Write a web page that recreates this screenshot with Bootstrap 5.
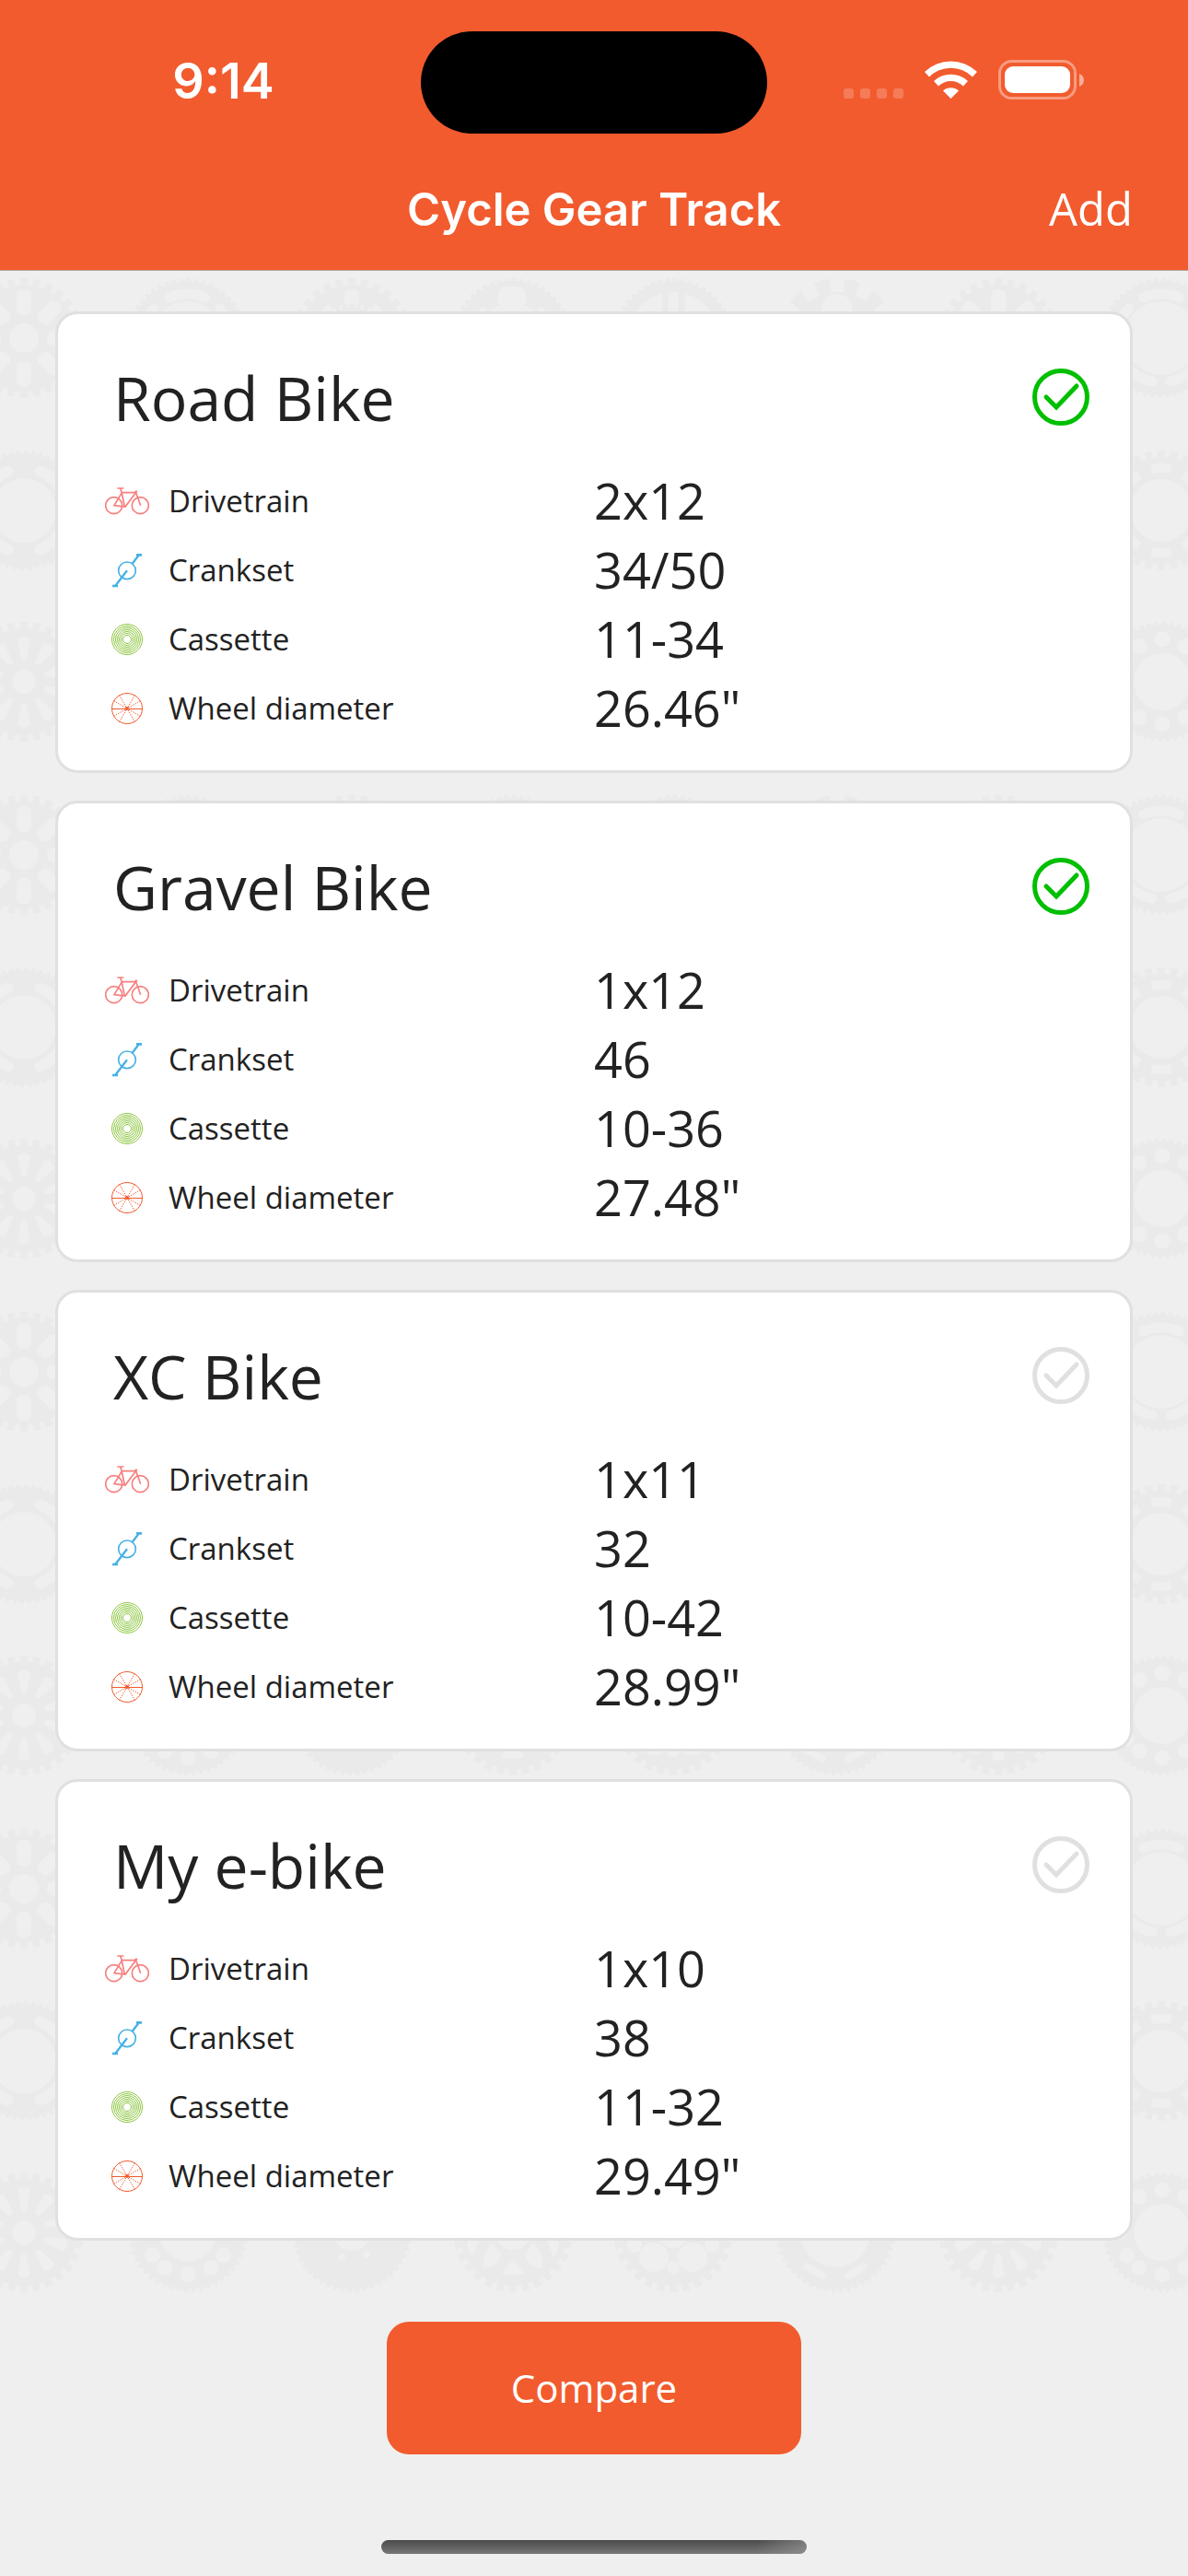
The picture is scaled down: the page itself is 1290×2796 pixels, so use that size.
<!DOCTYPE html>
<html lang="en">
<head>
<meta charset="utf-8">
<meta name="viewport" content="width=device-width, initial-scale=1">
<title>Cycle Gear Track</title>
<link rel="stylesheet" href="https://cdn.jsdelivr.net/npm/bootstrap@5.3.0/dist/css/bootstrap.min.css">
<style>
  :root { --brand: #f25b2e; --ink: #222; --line: #e0e0e0; --page: #efefef; --gear: #eaeaea; }
  body { background: var(--page); color: var(--ink); font-family: "Open Sans", "Noto Sans", sans-serif; }
  .app-header { background: var(--brand); color: #fff; border-bottom: 1px solid #b8a59c; }
  .status-bar { height: 162px; padding-top: 34px; }
  .status-side { height: 111px; }
  .clock { font: 600 54px/64px Inter, sans-serif; padding: 0 0 4px 28px; }
  .island { width: 376px; height: 111px; border-radius: 56px; background: #000; }
  .status-icons { padding-left: 83px; }
  .nav-row { height: 131px; padding: 0 60px; }
  .nav-title { font: 600 49px/64px Inter, sans-serif; }
  .nav-add { color: #fff; display: block; font-size: 49px; line-height: 64px; padding-bottom: 4px; text-decoration: none; }
  .bike-list { padding: 44px 60px 68px; }
  .gear-pattern { z-index: 0; }
  .bike-stack { z-index: 1; gap: 30px; }
  .bike-card { border: 3px solid var(--line); border-radius: 24px; background: #fff; padding-bottom: 30px; }
  .bike-head { height: 165px; padding: 0 43px 0 60px; }
  .bike-name { font-size: 66px; line-height: 92px; font-weight: 400; margin: 44px 0 0; }
  .bike-check.form-check-input { width: 64px; height: 64px; margin: 58px 0 0; border: 0; border-radius: 50%; background-color: transparent; background-size: 64px 64px;
    background-image: url("data:image/svg+xml,%3Csvg xmlns='http://www.w3.org/2000/svg' viewBox='0 0 64 64' fill='none' stroke='%23e0e0e0' stroke-width='5'%3E%3Ccircle cx='32' cy='32' r='28.5'/%3E%3Cpath d='M16 32l11 11 22-23' stroke-linecap='round'/%3E%3C/svg%3E"); }
  .bike-check.form-check-input:checked { background-color: transparent;
    background-image: url("data:image/svg+xml,%3Csvg xmlns='http://www.w3.org/2000/svg' viewBox='0 0 64 64' fill='none' stroke='%2300bf00' stroke-width='5'%3E%3Ccircle cx='32' cy='32' r='28.5'/%3E%3Cpath d='M16 32l11 11 22-23' stroke-linecap='round'/%3E%3C/svg%3E"); }
  .spec-line { height: 75px; }
  .spec-key { padding-left: 51px; gap: 21px; font-size: 33px; line-height: 45px; font-weight: 400; }
  .spec-key svg { width: 48px; height: 48px; flex: none; }
  .spec-value { font-size: 54px; line-height: 75px; }
  .btn-compare { --bs-btn-bg: #f25b2e; --bs-btn-color: #fff; --bs-btn-hover-bg: #db4e24; --bs-btn-hover-color: #fff; --bs-btn-active-bg: #db4e24; --bs-btn-active-color: #fff;
    min-width: 450px; height: 144px; margin-top: 20px; border: 0; border-radius: 24px; font-size: 42px; line-height: 56px; }
  .home-bar { width: 462px; height: 15px; margin: 93px 0 24px; border-radius: 8px; background: linear-gradient(100deg, transparent 88%, #9a9a9a99), linear-gradient(#4b4b4b, #777); }
</style>
</head>
<body>

<svg class="d-none" aria-hidden="true">
  <symbol id="i-drivetrain" viewBox="0 0 144 144">
    <g fill="none" stroke="#f77f7f" stroke-width="5">
      <circle cx="29" cy="86" r="27"/><circle cx="115" cy="86" r="27"/>
      <path d="M40 30h21M50 30l4 12 10 48M54 44h45l6-5M102 42L66 90l-36-4 24-40M99 38l17 48"/>
    </g>
  </symbol>
  <symbol id="i-crankset" viewBox="0 0 144 144">
    <g fill="none" stroke="#46b1e5" stroke-width="5">
      <circle cx="72" cy="73" r="28"/>
      <path d="M72 73L34 122M89 50l20-26" stroke-width="7"/><path d="M24 123h18M102 22h18" stroke-width="8"/>
    </g>
  </symbol>
  <symbol id="i-cassette" viewBox="0 0 144 144">
    <g fill="none" stroke="#8cc63f" stroke-width="3">
      <circle cx="72" cy="72" r="49.500"/><circle cx="72" cy="72" r="43.500"/><circle cx="72" cy="72" r="37.500"/><circle cx="72" cy="72" r="31.500"/>
      <circle cx="72" cy="72" r="25.500"/><circle cx="72" cy="72" r="19.500"/><circle cx="72" cy="72" r="13.500"/>
    </g>
  </symbol>
  <symbol id="i-wheel" viewBox="0 0 144 144">
    <g fill="none" stroke="#f25b2e" stroke-width="3">
      <circle cx="72" cy="72" r="49.500"/><path d="M22 73.500h100"/>
      <path d="M47 29l50 86M97 29l-50 86M29 47l86 50M115 47l-86 50" stroke-width="3" stroke-dasharray="4 4"/>
    </g>
    <circle cx="72" cy="72" r="6" fill="#f25b2e"/>
  </symbol>
</svg>

<header class="app-header">
  <div class="status-bar d-flex">
    <div class="status-side flex-fill d-flex align-items-center justify-content-center w-25"><span class="clock">9:14</span></div>
    <div class="island flex-shrink-0"></div>
    <div class="status-side status-icons flex-fill w-25">
      <svg width="264" height="111" viewBox="0 0 264 111" role="img" aria-label="Wi-Fi on, battery full">
        <g fill="#fff">
          <g opacity=".2"><rect y="62" width="11" height="11" rx="3"/><rect x="18" y="62" width="11" height="11" rx="3"/><rect x="36" y="62" width="11" height="11" rx="3"/><rect x="54" y="62" width="11" height="11" rx="3"/></g>
          <path d="M88 44a41 41 0 0 1 57 0l-5 5.500a33 33 0 0 0-47 0zM98 54a27 27 0 0 1 37 0l-5 5.500a19.500 19.500 0 0 0-27 0zM108 64.500a13 13 0 0 1 17 0L116.500 73z"/>
          <rect x="175" y="38" width="71" height="29" rx="9"/>
          <path d="M256 46q5 2 5 7t-5 7z" opacity=".5"/>
        </g>
        <rect x="169.500" y="32.500" width="82" height="40" rx="13" fill="none" stroke="#fff" stroke-width="3" opacity=".4"/>
      </svg>
    </div>
  </div>
  <nav class="nav-row d-flex align-items-center" aria-label="Main">
    <div class="col"></div>
    <h1 class="nav-title m-0">Cycle Gear Track</h1>
    <div class="col d-flex justify-content-end"><a class="nav-add" href="#add">Add</a></div>
  </nav>
</header>

<main>
  <section class="bike-list position-relative">
    <svg class="gear-pattern position-absolute top-0 start-0 w-100 h-100" aria-hidden="true">
      <defs>
        <g id="fine" fill="#eaeaea"><circle r="62"/><circle r="62" fill="none" stroke="#eaeaea" stroke-width="6" pathLength="96" stroke-dasharray="1 1"/></g>
        <g id="coarse" fill="#eaeaea"><circle r="58"/><circle r="60" fill="none" stroke="#eaeaea" stroke-width="10" pathLength="112" stroke-dasharray="2.200 1.800" stroke-dashoffset="1.100"/></g>
        <g id="eyes4"><circle r="8.500" cy="-46"/><circle r="8.500" cx="46"/><circle r="8.500" cy="46"/><circle r="8.500" cx="-46"/></g>
        <path id="drop" d="M-7 -46q7-7 14 0l-4 21q-3 4-6 0z"/>
        <g id="drops5"><use href="#drop"/><use href="#drop" transform="rotate(72)"/><use href="#drop" transform="rotate(144)"/><use href="#drop" transform="rotate(216)"/><use href="#drop" transform="rotate(288)"/></g>
        <rect id="slot" x="-8" y="-53" width="16" height="28" rx="6"/>
        <g id="slots4"><use href="#slot"/><use href="#slot" transform="rotate(90)"/><use href="#slot" transform="rotate(180)"/><use href="#slot" transform="rotate(270)"/></g>
        <g id="ringA1"><use href="#coarse"/><g fill="#efefef"><circle r="16"/><use href="#slots4"/><use href="#slots4" transform="rotate(45)"/></g></g>
        <g id="ringA2"><use href="#fine"/><circle r="40" fill="#efefef"/><circle r="48" fill="none" stroke="#efefef" stroke-width="11" stroke-linecap="round" pathLength="60" stroke-dasharray="8 4" stroke-dashoffset="-17"/></g>
        <g id="ringB1"><use href="#fine"/><circle r="35" fill="#efefef"/><circle r="46" fill="none" stroke="#efefef" stroke-width="12" stroke-linecap="round" pathLength="40" stroke-dasharray="5 5" stroke-dashoffset="-2.500"/></g>
        <g id="ringB2"><use href="#coarse"/><circle r="34" fill="#efefef"/><circle r="46" fill="none" stroke="#efefef" stroke-width="10" pathLength="40" stroke-dasharray="3 2" stroke-dashoffset="1.500"/></g>
        <g id="ringC1"><use href="#coarse"/><g fill="#efefef"><circle r="13"/><use href="#drops5"/><use href="#drops5" transform="rotate(36)"/></g></g>
        <g id="ringC2"><use href="#fine"/><g fill="#efefef"><circle r="31"/><use href="#eyes4"/><use href="#eyes4" transform="rotate(33)"/><use href="#eyes4" transform="rotate(-33)"/></g></g>
        <pattern id="gears" width="1058" height="561" patternUnits="userSpaceOnUse">
          <use href="#ringA1" x="26" y="73"/><use href="#ringA1" x="1084" y="73"/>
          <use href="#ringA2" x="203" y="73"/>
          <g transform="translate(382 73)"><use href="#coarse"/><g fill="#efefef"><circle r="38"/><use href="#slots4"/><path d="M-38-22l12-16 8 10-8 24-12 6zM38-22L26-38l-8 10 8 24 12 6z"/></g><use href="#coarse" transform="scale(.58)"/><circle r="24" fill="#efefef"/></g>
          <g transform="translate(556 73)"><use href="#fine"/><g fill="#efefef"><circle r="40" cy="2"/><rect x="-15" y="-56" width="30" height="25" rx="9"/><path d="M-32-34q5 0 5 8L-40 0l-12 10q-2-26 20-44zM32-34q-5 0-5 8L40 0l12 10q2-26-20-44z"/></g></g>
          <g transform="translate(731 73)"><use href="#fine"/><circle r="50" fill="#efefef"/><path d="M-9-55v110M9-55v110" stroke="#eaeaea" stroke-width="7"/></g>
          <g transform="translate(909 73)" fill="#eaeaea"><circle r="50"/><circle r="56" fill="none" stroke="#eaeaea" stroke-width="18" pathLength="48" stroke-dasharray="2 2" stroke-dashoffset="-1"/><g fill="#efefef"><circle r="17" cy="-31"/><circle r="17" cx="28" cy="16"/><circle r="17" cx="-28" cy="16"/></g></g>
          <use href="#ringB1" x="26" y="260"/><use href="#ringB1" x="1084" y="260"/>
          <use href="#ringB2" x="203" y="260"/><use href="#ringB1" x="380" y="260"/><use href="#ringB2" x="556" y="260"/><use href="#ringB1" x="731" y="260"/><use href="#ringB2" x="909" y="260"/>
          <use href="#ringC1" x="26" y="446"/><use href="#ringC1" x="1084" y="446"/>
          <use href="#ringC2" x="204" y="446"/>
          <g transform="translate(382 446)"><use href="#fine"/><g fill="#efefef"><circle r="20"/><circle r="4" cx="-11" cy="27"/><circle r="4" cx="16" cy="24"/></g></g>
          <g transform="translate(557 446)"><use href="#coarse"/><g fill="#efefef"><circle r="19"/><path d="M-13 44L0 30l13 14q-13 6-26 0z"/><path d="M-22 12l9 12q-3 14-19 15-1-18 10-27zM22 12l-9 12q3 14 19 15 1-18-10-27zM-50 6l14 0-8 22q-6-8-6-22zM50 6H36l8 22q6-8 6-22z"/></g></g>
          <g transform="translate(731 446)"><use href="#coarse"/><g fill="#efefef"><circle r="17"/><circle r="16" cx="-21" cy="27"/><circle r="16" cx="21" cy="27"/><circle r="8" cx="-42" cy="14"/><circle r="8" cx="42" cy="14"/><circle r="7" cy="38"/></g></g>
          <g transform="translate(907 446)"><use href="#fine"/><g fill="#efefef"><circle r="38"/><path d="M-31 37l17 10M31 37L14 47M-47 0v6M47 0v6" stroke="#efefef" stroke-width="8" stroke-linecap="round"/></g></g>
        </pattern>
      </defs>
      <rect width="100%" height="100%" fill="url(#gears)"/>
    </svg>

    <div class="bike-stack position-relative d-flex flex-column">
      <article class="bike-card">
        <div class="bike-head d-flex justify-content-between align-items-start">
          <h2 class="bike-name">Road Bike</h2>
          <input class="form-check-input bike-check" type="checkbox" aria-label="Compare Road Bike" checked>
        </div>
        <dl class="m-0">
          <div class="spec-line row g-0 align-items-center"><dt class="spec-key col-6 d-flex align-items-center"><svg aria-hidden="true"><use href="#i-drivetrain"/></svg>Drivetrain</dt><dd class="spec-value col-6 m-0">2x12</dd></div>
          <div class="spec-line row g-0 align-items-center"><dt class="spec-key col-6 d-flex align-items-center"><svg aria-hidden="true"><use href="#i-crankset"/></svg>Crankset</dt><dd class="spec-value col-6 m-0">34/50</dd></div>
          <div class="spec-line row g-0 align-items-center"><dt class="spec-key col-6 d-flex align-items-center"><svg aria-hidden="true"><use href="#i-cassette"/></svg>Cassette</dt><dd class="spec-value col-6 m-0">11-34</dd></div>
          <div class="spec-line row g-0 align-items-center"><dt class="spec-key col-6 d-flex align-items-center"><svg aria-hidden="true"><use href="#i-wheel"/></svg>Wheel diameter</dt><dd class="spec-value col-6 m-0">26.46"</dd></div>
        </dl>
      </article>

      <article class="bike-card">
        <div class="bike-head d-flex justify-content-between align-items-start">
          <h2 class="bike-name">Gravel Bike</h2>
          <input class="form-check-input bike-check" type="checkbox" aria-label="Compare Gravel Bike" checked>
        </div>
        <dl class="m-0">
          <div class="spec-line row g-0 align-items-center"><dt class="spec-key col-6 d-flex align-items-center"><svg aria-hidden="true"><use href="#i-drivetrain"/></svg>Drivetrain</dt><dd class="spec-value col-6 m-0">1x12</dd></div>
          <div class="spec-line row g-0 align-items-center"><dt class="spec-key col-6 d-flex align-items-center"><svg aria-hidden="true"><use href="#i-crankset"/></svg>Crankset</dt><dd class="spec-value col-6 m-0">46</dd></div>
          <div class="spec-line row g-0 align-items-center"><dt class="spec-key col-6 d-flex align-items-center"><svg aria-hidden="true"><use href="#i-cassette"/></svg>Cassette</dt><dd class="spec-value col-6 m-0">10-36</dd></div>
          <div class="spec-line row g-0 align-items-center"><dt class="spec-key col-6 d-flex align-items-center"><svg aria-hidden="true"><use href="#i-wheel"/></svg>Wheel diameter</dt><dd class="spec-value col-6 m-0">27.48"</dd></div>
        </dl>
      </article>

      <article class="bike-card">
        <div class="bike-head d-flex justify-content-between align-items-start">
          <h2 class="bike-name">XC Bike</h2>
          <input class="form-check-input bike-check" type="checkbox" aria-label="Compare XC Bike">
        </div>
        <dl class="m-0">
          <div class="spec-line row g-0 align-items-center"><dt class="spec-key col-6 d-flex align-items-center"><svg aria-hidden="true"><use href="#i-drivetrain"/></svg>Drivetrain</dt><dd class="spec-value col-6 m-0">1x11</dd></div>
          <div class="spec-line row g-0 align-items-center"><dt class="spec-key col-6 d-flex align-items-center"><svg aria-hidden="true"><use href="#i-crankset"/></svg>Crankset</dt><dd class="spec-value col-6 m-0">32</dd></div>
          <div class="spec-line row g-0 align-items-center"><dt class="spec-key col-6 d-flex align-items-center"><svg aria-hidden="true"><use href="#i-cassette"/></svg>Cassette</dt><dd class="spec-value col-6 m-0">10-42</dd></div>
          <div class="spec-line row g-0 align-items-center"><dt class="spec-key col-6 d-flex align-items-center"><svg aria-hidden="true"><use href="#i-wheel"/></svg>Wheel diameter</dt><dd class="spec-value col-6 m-0">28.99"</dd></div>
        </dl>
      </article>

      <article class="bike-card">
        <div class="bike-head d-flex justify-content-between align-items-start">
          <h2 class="bike-name">My e-bike</h2>
          <input class="form-check-input bike-check" type="checkbox" aria-label="Compare My e-bike">
        </div>
        <dl class="m-0">
          <div class="spec-line row g-0 align-items-center"><dt class="spec-key col-6 d-flex align-items-center"><svg aria-hidden="true"><use href="#i-drivetrain"/></svg>Drivetrain</dt><dd class="spec-value col-6 m-0">1x10</dd></div>
          <div class="spec-line row g-0 align-items-center"><dt class="spec-key col-6 d-flex align-items-center"><svg aria-hidden="true"><use href="#i-crankset"/></svg>Crankset</dt><dd class="spec-value col-6 m-0">38</dd></div>
          <div class="spec-line row g-0 align-items-center"><dt class="spec-key col-6 d-flex align-items-center"><svg aria-hidden="true"><use href="#i-cassette"/></svg>Cassette</dt><dd class="spec-value col-6 m-0">11-32</dd></div>
          <div class="spec-line row g-0 align-items-center"><dt class="spec-key col-6 d-flex align-items-center"><svg aria-hidden="true"><use href="#i-wheel"/></svg>Wheel diameter</dt><dd class="spec-value col-6 m-0">29.49"</dd></div>
        </dl>
      </article>
    </div>
  </section>
</main>

<footer class="d-flex flex-column align-items-center">
  <button type="button" class="btn btn-compare">Compare</button>
  <div class="home-bar"></div>
</footer>

<script src="https://cdn.jsdelivr.net/npm/bootstrap@5.3.0/dist/js/bootstrap.bundle.min.js"></script>
</body>
</html>
